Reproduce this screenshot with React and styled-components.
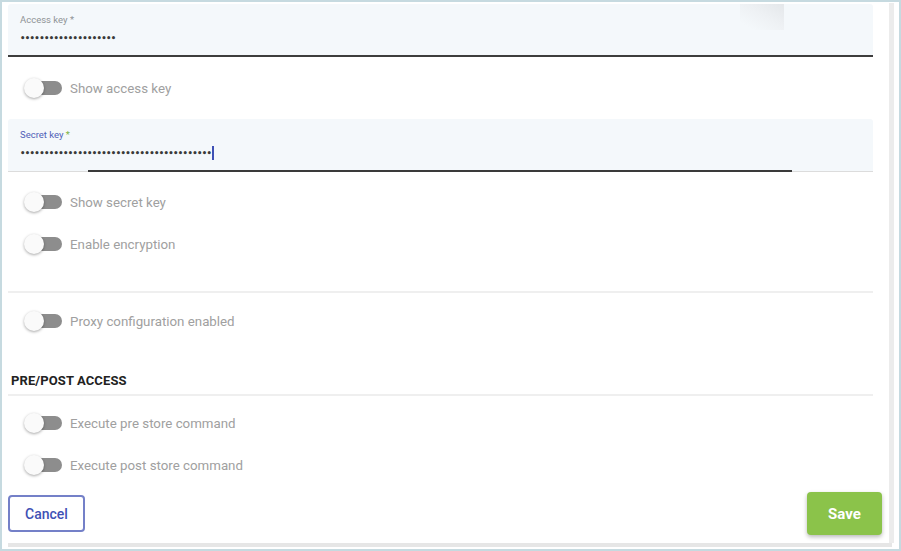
import React from "react";
import styled, { createGlobalStyle } from "styled-components";

const Global = createGlobalStyle`
  html, body { margin: 0; padding: 0; background: #ffffff; }
  body { font-family: Roboto, "Liberation Sans", Arial, sans-serif; }
  #root { width: 901px; height: 551px; }
  * { box-sizing: border-box; }
`;

const Frame = styled.div`
  width: 901px;
  height: 551px;
  border: 2px solid #c6dae0;
  display: flex;
  flex-direction: column;
  background: #fff;
  overflow: hidden;
`;

const Body = styled.div`
  flex: 1;
  display: flex;
  min-height: 0;
`;

const Content = styled.div`
  flex: 1;
  padding: 2px 0 0 6px;
  display: flex;
  flex-direction: column;
`;

const ScrollTrack = styled.div`
  width: 5px;
  margin: 1px 5px 0 4px;
  background: #ececec;
`;

const Field = styled.div`
  position: relative;
  margin-right: 12px;
  height: ${(p) => p.$h}px;
  background: #f4f8fb;
  padding: 10px 12px 0;
  border-bottom: ${(p) => (p.$active ? "1px solid #dcdcdc" : "2px solid #3d3d3d")};
  border-radius: 3px 3px 0 0;
`;

const Underline = styled.div`
  position: absolute;
  left: 80px;
  right: 81px;
  bottom: -1px;
  height: 2px;
  background: #3a3a3a;
`;

const Smudge = styled.div`
  position: absolute;
  top: 0;
  left: 732px;
  width: 44px;
  height: 26px;
  background: linear-gradient(210deg, #e4e7ea 0%, #eef1f4 45%, rgba(244, 248, 251, 0) 85%);
`;

const FieldLabel = styled.div`
  font-size: 9.5px;
  line-height: 12px;
  color: ${(p) => (p.$active ? "#4f5fb8" : "#8f9396")};
  span { color: #7cb342; }
`;

const Dots = styled.div`
  margin-top: 5px;
  display: flex;
  align-items: center;
  height: 14px;
  font-family: "DejaVu Sans", sans-serif;
  font-size: 8.5px;
  font-weight: 700;
  letter-spacing: ${(p) => p.$ls}px;
  color: #3a3a3a;
  line-height: 14px;
`;

const Caret = styled.i`
  display: inline-block;
  width: 1.5px;
  height: 14px;
  margin-left: 1px;
  background: #3f51b5;
`;

const ToggleRow = styled.div`
  height: 42px;
  display: flex;
  align-items: center;
  padding-left: 16px;
  gap: 8px;
`;

const Switch = styled.span`
  position: relative;
  width: 38px;
  height: 20px;
  flex: none;
  &::before {
    content: "";
    position: absolute;
    left: 4px;
    right: 0;
    top: 3px;
    height: 14px;
    border-radius: 7px;
    background: #8d8d8d;
  }
  &::after {
    content: "";
    position: absolute;
    left: 0;
    top: 0;
    width: 20px;
    height: 20px;
    border-radius: 50%;
    background: #fafafa;
    box-shadow: 0 1px 3px rgba(0, 0, 0, 0.35);
  }
`;

const ToggleText = styled.span`
  font-size: 13.3px;
  color: #a0a0a0;
`;

const Divider = styled.hr`
  margin: 0 12px 0 0;
  border: none;
  height: 2px;
  background: #efefef;
`;

const Spacer = styled.div`
  height: ${(p) => p.$h}px;
  flex: none;
`;

const Heading = styled.h3`
  margin: 0;
  padding-left: 3px;
  height: 52px;
  display: flex;
  align-items: flex-end;
  padding-bottom: 6px;
  font-size: 13px;
  font-weight: 700;
  color: #222;
  letter-spacing: 0.1px;
`;

const Actions = styled.div`
  display: flex;
  justify-content: space-between;
  align-items: center;
  margin-right: 3px;
  margin-top: 6px;
`;

const Button = styled.button`
  font-family: Roboto, "Liberation Sans", Arial, sans-serif;
  border-radius: 4px;
  cursor: pointer;
  font-weight: 500;
  ${(p) =>
    p.$primary
      ? `
    width: 75px;
    height: 43px;
    border: none;
    background: #8bc34a;
    color: #fff;
    font-size: 15px;
    font-weight: 700;
    box-shadow: 0 2px 4px rgba(0,0,0,0.28);
  `
      : `
    width: 77px;
    height: 37px;
    border: 2px solid #7480c8;
    background: #fff;
    color: #3f51b5;
    font-size: 14px;
  `}
`;

const BottomBar = styled.div`
  height: 4px;
  margin: 0 7px 2px 6px;
  background: #e6e6e6;
`;

const Toggle = ({ label }) => (
  <ToggleRow>
    <Switch />
    <ToggleText>{label}</ToggleText>
  </ToggleRow>
);

export default function App() {
  return (
    <>
      <Global />
      <Frame>
        <Body>
          <Content>
            <Field $h={53}>
              <Smudge />
              <FieldLabel>Access key *</FieldLabel>
              <Dots $ls={-0.65}>{"•".repeat(20)}</Dots>
            </Field>
            <Spacer $h={10} />
            <Toggle label="Show access key" />
            <Spacer $h={10} />
            <Field $h={53} $active>
              <FieldLabel $active>
                Secret key <span>*</span>
              </FieldLabel>
              <Dots $ls={-0.65}>
                {"•".repeat(40)}
                <Caret />
              </Dots>
              <Underline />
            </Field>
            <Spacer $h={9} />
            <Toggle label="Show secret key" />
            <Toggle label="Enable encryption" />
            <Spacer $h={26} />
            <Divider />
            <Spacer $h={7} />
            <Toggle label="Proxy configuration enabled" />
            <Heading>PRE/POST ACCESS</Heading>
            <Divider />
            <Spacer $h={6} />
            <Toggle label="Execute pre store command" />
            <Toggle label="Execute post store command" />
            <Actions>
              <Button>Cancel</Button>
              <Button $primary>Save</Button>
            </Actions>
          </Content>
          <ScrollTrack />
        </Body>
        <BottomBar />
      </Frame>
    </>
  );
}
